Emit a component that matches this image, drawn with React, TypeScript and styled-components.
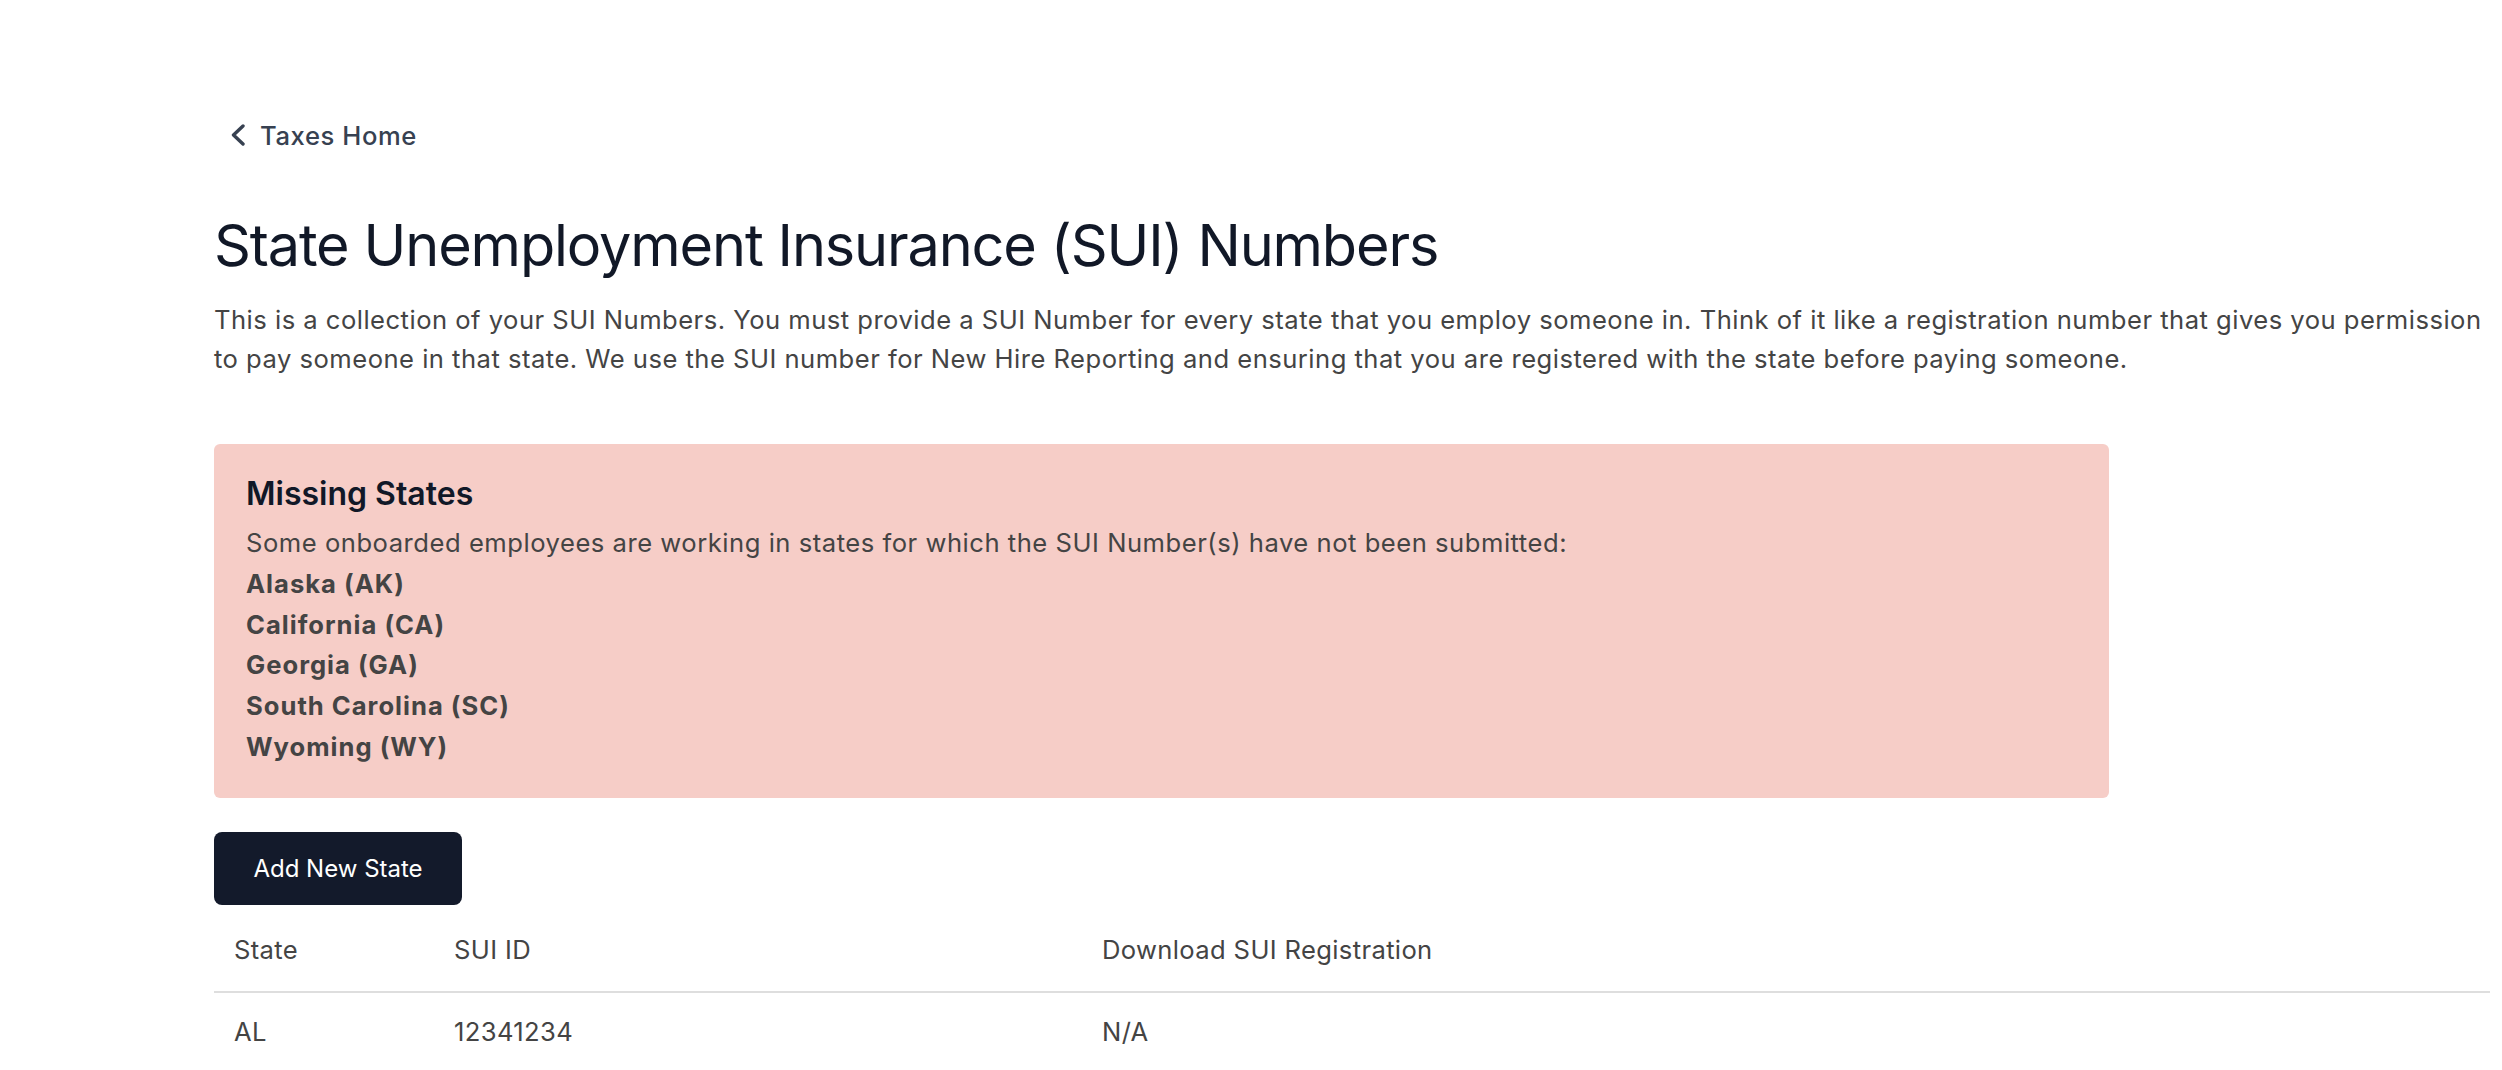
import { createGlobalStyle, styled } from "styled-components";

const GlobalStyle = createGlobalStyle`
  html, body {
    margin: 0;
    padding: 0;
    background: #ffffff;
  }
  body {
    font-family: Inter, "Noto Sans", "Liberation Sans", sans-serif;
    color: #444444;
  }
  * {
    box-sizing: border-box;
  }
`;

const Page = styled.main`
  padding: 116px 12px 0 214px;
`;

const BackLink = styled.a`
  display: inline-flex;
  align-items: center;
  gap: 15px;
  height: 38.4px;
  color: #374151;
  font-size: 25.6px;
  font-weight: 500;
  letter-spacing: 0.6px;
  text-decoration: none;
  padding-left: 17px;
  cursor: pointer;
`;

const Title = styled.h1`
  margin: 59px 0 0;
  color: #111827;
  font-size: 57.6px;
  line-height: 64px;
  font-weight: 400;
  letter-spacing: -1.15px;
`;

const Intro = styled.p`
  margin: 24px 0 0;
  font-size: 25.6px;
  line-height: 38.4px;
  letter-spacing: 0.48px;
  color: #444444;
`;

const Alert = styled.section`
  margin-top: 66px;
  width: 1895px;
  background: #f6cdc7;
  border-radius: 6px;
  padding: 32px 32px 30px;
`;

const AlertTitle = styled.h2`
  margin: 0;
  color: #111827;
  font-size: 32px;
  line-height: 36.8px;
  font-weight: 600;
`;

const AlertText = styled.p<{ $bold?: boolean }>`
  margin: 0;
  font-size: 25.6px;
  line-height: 40.8px;
  color: #444444;
  font-weight: ${(p) => (p.$bold ? 650 : 400)};
  letter-spacing: ${(p) => (p.$bold ? "1px" : "0.52px")};
  &:nth-of-type(1) {
    margin-top: 10px;
  }
`;

const Button = styled.button`
  margin-top: 34px;
  display: block;
  height: 73px;
  width: 248px;
  padding: 0;
  border: none;
  border-radius: 8px;
  background: #131a2b;
  color: #ffffff;
  font-family: inherit;
  font-size: 24px;
  font-weight: 400;
  cursor: pointer;
`;

const Table = styled.div`
  margin-top: 4px;
  width: 2276px;
`;

const Row = styled.div<{ $head?: boolean }>`
  display: grid;
  grid-template-columns: 220px 648px 1fr;
  border-bottom: ${(p) => (p.$head ? "2px solid #dedede" : "none")};
  padding: ${(p) => (p.$head ? "22px 0 22px" : "20px 0")};
`;

const Cell = styled.div`
  padding-left: 20px;
  font-size: 25.6px;
  line-height: 38.4px;
  letter-spacing: 0.35px;
  color: #444444;
`;

const ChevronLeft = () => (
  <svg width="14" height="22" viewBox="0 0 14 22" fill="none">
    <polyline
      points="12,2 2.5,11 12,20"
      stroke="#374151"
      strokeWidth="3.4"
      strokeLinecap="round"
      strokeLinejoin="round"
    />
  </svg>
);

const missing = ["Alaska (AK)", "California (CA)", "Georgia (GA)", "South Carolina (SC)", "Wyoming (WY)"];

const rows = [{ state: "AL", id: "12341234", file: "N/A" }];

export default function App() {
  return (
    <>
      <GlobalStyle />
      <Page>
        <BackLink>
          <ChevronLeft />
          Taxes Home
        </BackLink>
        <Title>State Unemployment Insurance (SUI) Numbers</Title>
        <Intro>
          This is a collection of your SUI Numbers. You must provide a SUI Number for every state that you employ
          someone in. Think of it like a registration number that gives you permission to pay someone in that state.
          We use the SUI number for New Hire Reporting and ensuring that you are registered with the state before
          paying someone.
        </Intro>
        <Alert>
          <AlertTitle>Missing States</AlertTitle>
          <AlertText>
            Some onboarded employees are working in states for which the SUI Number(s) have not been submitted:
          </AlertText>
          {missing.map((s) => (
            <AlertText key={s} $bold>
              {s}
            </AlertText>
          ))}
        </Alert>
        <Button>Add New State</Button>
        <Table>
          <Row $head>
            <Cell>State</Cell>
            <Cell>SUI ID</Cell>
            <Cell>Download SUI Registration</Cell>
          </Row>
          {rows.map((r) => (
            <Row key={r.state}>
              <Cell>{r.state}</Cell>
              <Cell>{r.id}</Cell>
              <Cell>{r.file}</Cell>
            </Row>
          ))}
        </Table>
      </Page>
    </>
  );
}
